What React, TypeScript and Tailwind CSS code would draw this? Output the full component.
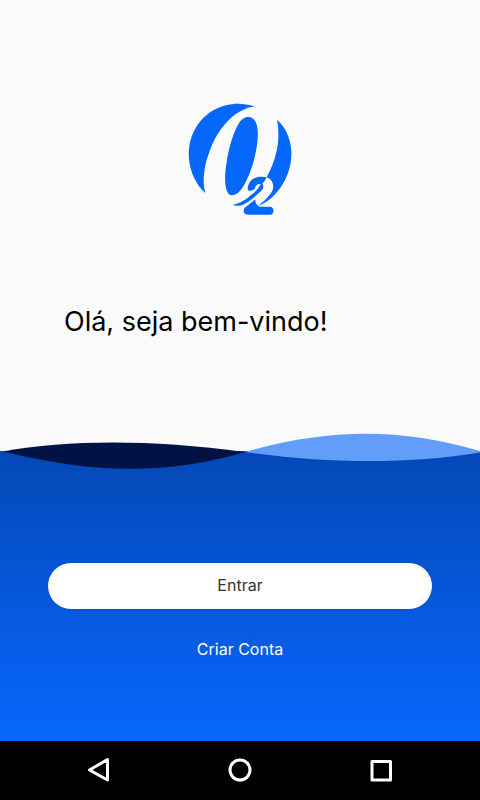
import { useState } from 'react';

function Logo() {
  return (
    <svg viewBox="0 0 360 375" className="w-[120px] h-[125px]" role="img" aria-label="O2">
      <g fill="#0667fb">
        {/* left side of the disc */}
        <path d="M76 294 C26 248 9 163 47 99 C81 39 154 11 224 34 C169 42 121 91 94 155 C73 205 65 254 76 294 Z" />
        {/* right side of the disc, tapering down to the foot of the 2 */}
        <path d="M291 74 C337 114 347 189 318 248 C303 281 277 315 235 333 C259 312 285 291 279 268 C276 256 270 250 260 247 C287 198 304 137 291 74 Z" />
        {/* counter of the O */}
        <path d="M207 66 C235 69 238 112 229 163 C221 209 203 257 184 283 C175 295 164 302 154 301 C134 298 132 252 139 207 C145 165 157 119 174 89 C183 73 195 65 207 66 Z" />
        {/* top of the 2, up to the edge of the O */}
        <path d="M203 281 C205 257 222 244 245 245 C251 245 256 246 260 247 C256 256 251 262 245 269 C234 263 227 271 225 279 C221 288 204 291 203 281 Z" />
        <path d="M245 264 C255 274 249 283 239 292 C221 309 203 322 188 330 C178 333 168 333 157 330 C181 325 200 313 216 298 C228 288 238 277 245 264 Z" />
        {/* foot of the 2 */}
        <path d="M194 338 C205 330 216 321 226 313 C225 322 229 329 238 335 H270 C284 335 284 359 270 359 H204 C190 359 188 346 194 338 Z" />
      </g>
    </svg>
  );
}

function Waves() {
  return (
    <svg viewBox="0 0 480 36" preserveAspectRatio="none" className="block w-full h-9 -mt-[18px]" aria-hidden="true">
      <path d="M3 18.5 C70 6.5 150 6.5 245 19 C170 41.5 95 41.5 3 18.5 Z" fill="#001344" />
      <path d="M245 19 C330 -5 400 -5 480 18 V19.5 C410 31 330 31 245 19 Z" fill="#629ef9" />
    </svg>
  );
}

function NavBar() {
  return (
    <nav className="flex h-[59px] items-center justify-center gap-[117px] bg-black pb-px text-white">
      <button type="button" aria-label="Voltar">
        <svg width="24" height="26" viewBox="0 0 24 26" fill="none" stroke="currentColor" strokeWidth="3" strokeLinejoin="round">
          <path d="M20.5 2.5 V23 L2.5 13 Z" />
        </svg>
      </button>
      <button type="button" aria-label="Início">
        <svg width="24" height="24" viewBox="0 0 24 24" fill="none" stroke="currentColor" strokeWidth="3">
          <circle cx="12" cy="12" r="10" />
        </svg>
      </button>
      <button type="button" aria-label="Recentes">
        <svg width="24" height="24" viewBox="0 0 24 24" fill="none" stroke="currentColor" strokeWidth="3" strokeLinejoin="round">
          <rect x="3" y="3.5" width="18.5" height="18.5" />
        </svg>
      </button>
    </nav>
  );
}

export default function App() {
  const [pressed, setPressed] = useState(false);

  return (
    <div className="flex min-h-screen flex-col bg-[#fafafa] font-['Inter',sans-serif]">
      <header className="flex h-[451px] flex-col pt-[95px]">
        <div className="flex justify-center">
          <Logo />
        </div>
        <h1 className="mt-[82px] px-16 text-[27px] leading-10 font-normal text-black">Olá, seja bem-vindo!</h1>
      </header>

      <main className="flex flex-1 flex-col bg-linear-to-b from-[#0448b6] to-[#0767fe]">
        <Waves />
        <div className="mt-[94px] flex flex-col items-center gap-5">
          <button
            type="button"
            aria-pressed={pressed}
            onClick={() => setPressed(!pressed)}
            className="h-[46px] w-4/5 rounded-full bg-white pb-0.5 text-base text-[#333333]"
          >
            Entrar
          </button>
          <a href="#criar-conta" className="px-4 py-2 text-base text-white">
            Criar Conta
          </a>
        </div>
      </main>

      <NavBar />
    </div>
  );
}
